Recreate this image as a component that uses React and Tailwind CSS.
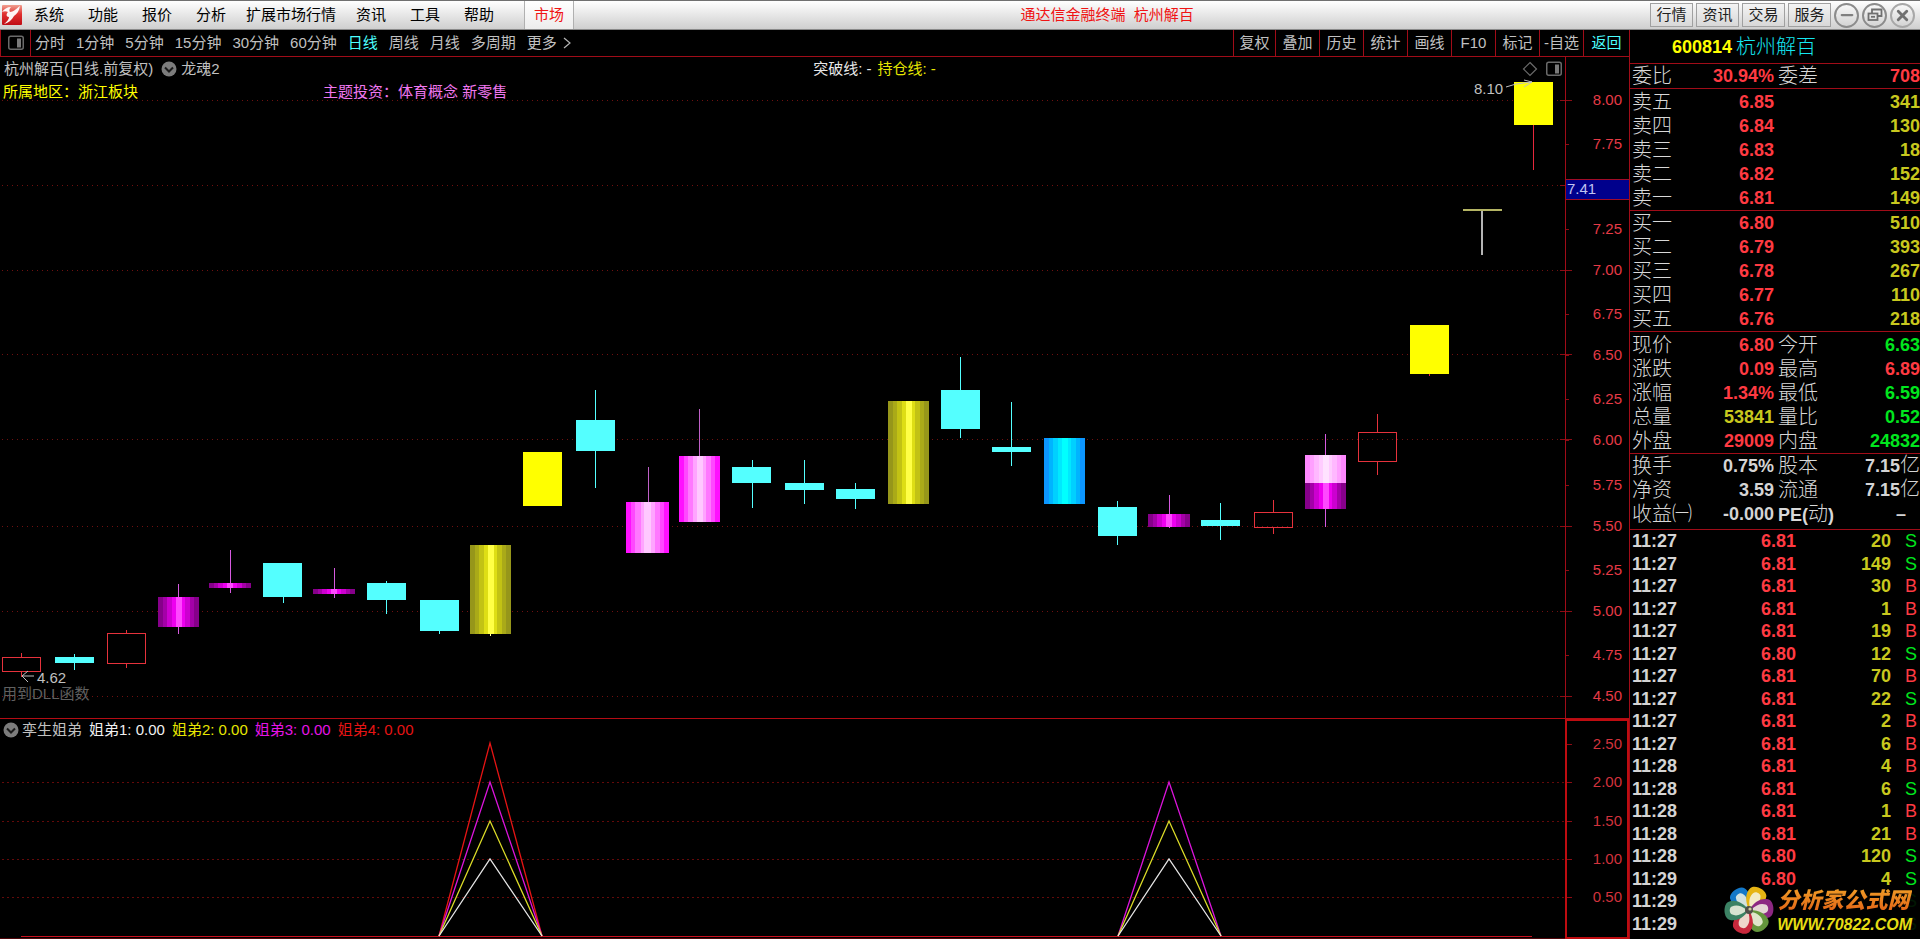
import React from "react";
import { Minus, X } from "lucide-react";

const CHART_FONT = '"Liberation Sans", "Noto Sans CJK SC", sans-serif';

const MENU = ["系统", "功能", "报价", "分析", "扩展市场行情", "资讯", "工具", "帮助"];
const PERIODS = ["分时", "1分钟", "5分钟", "15分钟", "30分钟", "60分钟", "日线", "周线", "月线", "多周期"];
const TOOLS = ["复权", "叠加", "历史", "统计", "画线", "F10", "标记", "-自选"];
const QUICK = ["行情", "资讯", "交易", "服务"];

const RED = "text-[#ff3a42]";
const GREEN = "text-[#00e61e]";
const YELLOW = "text-[#c8c81e]";
const WHITE = "text-[#d4d4d4]";

const SELLS = [
  ["卖五", "6.85", "341"],
  ["卖四", "6.84", "130"],
  ["卖三", "6.83", "18"],
  ["卖二", "6.82", "152"],
  ["卖一", "6.81", "149"],
];

const BUYS = [
  ["买一", "6.80", "510"],
  ["买二", "6.79", "393"],
  ["买三", "6.78", "267"],
  ["买四", "6.77", "110"],
  ["买五", "6.76", "218"],
];

const QUOTE = [
  ["现价", "6.80", RED, "今开", "6.63", GREEN],
  ["涨跌", "0.09", RED, "最高", "6.89", RED],
  ["涨幅", "1.34%", RED, "最低", "6.59", GREEN],
  ["总量", "53841", YELLOW, "量比", "0.52", GREEN],
  ["外盘", "29009", RED, "内盘", "24832", GREEN],
];

const TICKS = [
  ["11:27", "6.81", "20", "S"],
  ["11:27", "6.81", "149", "S"],
  ["11:27", "6.81", "30", "B"],
  ["11:27", "6.81", "1", "B"],
  ["11:27", "6.81", "19", "B"],
  ["11:27", "6.80", "12", "S"],
  ["11:27", "6.81", "70", "B"],
  ["11:27", "6.81", "22", "S"],
  ["11:27", "6.81", "2", "B"],
  ["11:27", "6.81", "6", "B"],
  ["11:28", "6.81", "4", "B"],
  ["11:28", "6.81", "6", "S"],
  ["11:28", "6.81", "1", "B"],
  ["11:28", "6.81", "21", "B"],
  ["11:28", "6.80", "120", "S"],
  ["11:29", "6.80", "4", "S"],
  ["11:29", "", "", "S"],
  ["11:29", "", "", "S"],
];

// x, width, body top, body bottom, wick x, wick top, wick bottom, kind
const CANDLES = [
  [2, 39, 657, 672, 21, 653, 677, "hollow"],
  [55, 39, 657, 663, 74, 654, 670, "cyan"],
  [107, 39, 633, 664, 126, 630, 668, "hollow"],
  [158, 41, 597, 627, 178, 584, 634, "magenta"],
  [209, 42, 583, 588, 230, 550, 593, "magenta"],
  [263, 39, 563, 597, 283, 563, 603, "cyan"],
  [313, 42, 589, 594, 334, 568, 598, "magenta"],
  [367, 39, 583, 600, 386, 581, 614, "cyan"],
  [420, 39, 600, 631, 439, 600, 634, "cyan"],
  [470, 41, 545, 634, 490, 545, 636, "gold"],
  [523, 39, 452, 506, 542, 452, 506, "yellow"],
  [576, 39, 420, 451, 595, 390, 488, "cyan"],
  [626, 43, 502, 553, 648, 467, 553, "pink"],
  [679, 41, 456, 522, 699, 409, 522, "pink"],
  [732, 39, 467, 483, 752, 460, 508, "cyan"],
  [785, 39, 483, 490, 804, 460, 504, "cyan"],
  [836, 39, 489, 499, 855, 483, 509, "cyan"],
  [888, 41, 401, 504, 908, 401, 504, "gold"],
  [941, 39, 390, 429, 960, 357, 438, "cyan"],
  [992, 39, 447, 452, 1011, 402, 466, "cyan"],
  [1044, 41, 438, 504, 1064, 438, 504, "blue"],
  [1098, 39, 507, 536, 1117, 501, 545, "cyan"],
  [1148, 42, 514, 527, 1169, 495, 528, "magenta"],
  [1201, 39, 520, 526, 1220, 503, 540, "cyan"],
  [1254, 39, 512, 528, 1273, 500, 534, "hollow"],
  [1305, 41, 483, 509, 1325, 434, 527, "magenta"],
  [1305, 41, 455, 483, 1325, 455, 483, "light"],
  [1358, 39, 432, 462, 1377, 414, 475, "hollow"],
  [1410, 39, 325, 374, 1429, 325, 376, "yellow"],
  [1514, 39, 82, 125, 1533, 82, 170, "yellow"],
];

const SHADES = {
  magenta: ["#86008a", "#a400a8", "#cc00d0", "#ee00f0", "#ff48ff"],
  gold: ["#96961a", "#aaaa18", "#c2c214", "#dede14", "#ffff46"],
  pink: ["#ff10ff", "#ff48ff", "#ff78ff", "#ffa4ff", "#ffc8ff"],
  blue: ["#0c96ff", "#00b4ff", "#00d0ff", "#00e8ff", "#00ffff"],
  light: ["#ff88ff", "#ffa0ff", "#ffb8ff", "#ffccff", "#ffe2ff"],
};

const FILLS = {
  cyan: "#54ffff",
  yellow: "#ffff00",
  magenta: "url(#magenta)",
  gold: "url(#gold)",
  pink: "url(#pink)",
  blue: "url(#blue)",
  light: "url(#light)",
};

const WICKS = {
  hollow: "#e6323c",
  cyan: "#54ffff",
  yellow: "#e6283c",
  magenta: "#d65ae0",
  pink: "#c060c8",
  gold: "#ffffa0",
  blue: "#00ffff",
  light: "#ffe2ff",
};

const GRID = [100, 185, 270, 354, 439, 526, 611, 696];
const PRICES = [
  ["8.00", 100],
  ["7.75", 144],
  ["7.25", 229],
  ["7.00", 270],
  ["6.75", 314],
  ["6.50", 355],
  ["6.25", 399],
  ["6.00", 440],
  ["5.75", 485],
  ["5.50", 526],
  ["5.25", 570],
  ["5.00", 611],
  ["4.75", 655],
  ["4.50", 696],
];

const LEVELS = [
  ["2.50", 744],
  ["2.00", 782],
  ["1.50", 821],
  ["1.00", 859],
  ["0.50", 897],
];

function ShadeGradient({ id, colors }) {
  const bands = [...colors, ...colors.slice(0, -1).reverse()];
  const edges = [0, 12, 22, 34, 43, 58, 67, 79, 89, 100];
  return (
    <linearGradient id={id}>
      {bands.map((color, i) => (
        <React.Fragment key={i}>
          <stop offset={`${edges[i]}%`} stopColor={color} />
          <stop offset={`${edges[i + 1]}%`} stopColor={color} />
        </React.Fragment>
      ))}
    </linearGradient>
  );
}

function Candle({ data }) {
  const [x, w, top, bottom, wx, high, low, kind] = data;
  const wick = WICKS[kind];
  if (kind === "hollow") {
    return (
      <g stroke={wick} fill="none">
        <rect x={x + 0.5} y={top + 0.5} width={w - 1} height={bottom - top - 1} />
        <path d={`M${wx + 0.5} ${high}V${top}M${wx + 0.5} ${bottom}V${low}`} />
      </g>
    );
  }
  return (
    <g>
      <rect x={x} y={top} width={w} height={bottom - top} fill={FILLS[kind]} />
      <path d={`M${wx + 0.5} ${high}V${top}M${wx + 0.5} ${bottom}V${low}`} stroke={wick} />
    </g>
  );
}

function ChevronDisc() {
  return (
    <svg className="size-4" viewBox="0 0 16 16">
      <circle cx="8" cy="8" r="7.5" fill="#7c7c7c" />
      <path d="M4 6.5l4 4 4-4" fill="none" stroke="#1a1a1a" strokeWidth="2" />
    </svg>
  );
}

function PaneIcon() {
  return (
    <svg className="size-4" viewBox="0 0 16 16">
      <rect x="0.75" y="1.25" width="14.5" height="13" rx="2" fill="none" stroke="#6a6a6a" strokeWidth="1.5" />
      <rect x="9" y="3.5" width="4" height="9" fill="#7a7a7a" />
    </svg>
  );
}

function MenuBar() {
  return (
    <header className="flex h-[30px] items-center border-t border-b border-t-[#707070] border-b-[#8a8a8a] bg-linear-to-b from-white to-[#cfcfcf] text-[15px] leading-5 text-black">
      <svg className="ml-0.5 size-5 shrink-0" viewBox="0 0 20 20">
        <defs>
          <linearGradient id="logo" x1="0" y1="0" x2="0" y2="1">
            <stop offset="0" stopColor="#f0a090" />
            <stop offset="0.45" stopColor="#e03030" />
            <stop offset="1" stopColor="#c00c14" />
          </linearGradient>
        </defs>
        <rect width="20" height="20" rx="1" fill="url(#logo)" />
        <path d="M0 7c2-3 5-5 9-5-2 2-2 4-1 5 3 0 6-3 10-6-1 5-3 8-6 10-2 4-6 7-10 8 3-2 5-5 5-7-3 0-3-3-1-5-2-1-4-1-6 0z" fill="#fff" fillOpacity="0.95" />
      </svg>
      <nav className="flex pr-[18px]">
        {MENU.map((item) => (
          <button key={item} type="button" className={item.length > 2 ? "px-2" : "px-3"}>
            {item}
          </button>
        ))}
      </nav>
      <button type="button" className="h-full w-[50px] shrink-0 border-x border-[#b0b0b0] bg-linear-to-b from-white to-[#ececec] text-[#f01414]">
        市场
      </button>
      <h1 className="flex-1 pr-2.5 text-center whitespace-pre text-[#f01414]">通达信金融终端{"  "}杭州解百</h1>
      <div className="flex items-center gap-[3px] pr-[5px]">
        {QUICK.map((item) => (
          <button
            key={item}
            type="button"
            className="h-6 w-[43px] border border-[#a0a0a0] bg-linear-to-b from-[#f4f4f4] to-[#d8d8d8] text-[#202020]"
          >
            {item}
          </button>
        ))}
        <button type="button" aria-label="最小化" className="flex size-[25px] items-center justify-center rounded-full border-2 border-[#8c8c8c] text-[#808080]">
          <Minus size={18} strokeWidth={3} />
        </button>
        <button type="button" aria-label="还原" className="flex size-[25px] items-center justify-center rounded-full border-2 border-[#8c8c8c]">
          <svg className="size-4" viewBox="0 0 16 16" fill="none" stroke="#707070" strokeWidth="1.8">
            <path d="M5 6V2.5h9.5V9H11" />
            <rect x="1.5" y="6.5" width="9" height="6.5" />
            <path d="M4 9.8h4" />
          </svg>
        </button>
        <button type="button" aria-label="关闭" className="flex size-[25px] items-center justify-center rounded-full border-2 border-[#a8a8a8] text-[#707070]">
          <X size={17} strokeWidth={4} />
        </button>
      </div>
    </header>
  );
}

function PeriodBar() {
  return (
    <div className="flex h-[27px] items-stretch border-b border-[#a00c18] text-[15px] leading-5">
      <button type="button" aria-label="侧栏" className="flex w-[31px] items-center justify-center border-x border-[#a00c18]">
        <PaneIcon />
      </button>
      <nav className="flex flex-1 items-center gap-[11px] pl-1">
        {PERIODS.map((item) => (
          <button key={item} type="button" className={item === "日线" ? "text-[#4dffff]" : ""}>
            {item}
          </button>
        ))}
        <button type="button" className="flex items-center gap-1.5">
          更多
          <svg className="h-3 w-2" viewBox="0 0 8 12" fill="none" stroke="#b4b4b4" strokeWidth="1.2">
            <path d="M1 1l6 5-6 5" />
          </svg>
        </button>
      </nav>
      <div className="flex">
        {TOOLS.map((item) => (
          <button key={item} type="button" className="w-11 border-l border-[#a00c18] first:w-[42px]">
            {item}
          </button>
        ))}
        <button type="button" className="w-[46px] border-l border-[#a00c18] text-[#4dffff]">
          返回
        </button>
      </div>
    </div>
  );
}

function PriceChart() {
  return (
    <section className="relative">
      <svg
        className="block h-auto w-full"
        viewBox="0 57 1629 661"
        shapeRendering="crispEdges"
        fontFamily={CHART_FONT}
        fontSize="15"
      >
        <defs>
          {Object.entries(SHADES).map(([id, colors]) => (
            <ShadeGradient key={id} id={id} colors={colors} />
          ))}
        </defs>

        {GRID.map((y) => (
          <g key={y}>
            <path d={`M2 ${y + 0.5}H1560`} stroke="#701010" strokeDasharray="1 4" />
            <path d={`M1560 ${y + 0.5}H1572`} stroke="#8c0c14" />
          </g>
        ))}
        {PRICES.map(([label, y]) => (
          <g key={label}>
            <path d={`M1566 ${y + 0.5}H1569`} stroke="#8c0c14" />
            <text x="1622" y={y + 5} textAnchor="end" fill="#e63a46">
              {label}
            </text>
          </g>
        ))}
        <path d="M1565.5 57V718" stroke="#a00c18" />
        <rect x="1566" y="180" width="63" height="20" fill="#00008c" />
        <path d="M1566 179.5H1629M1566 199.5H1629" stroke="#a00c28" />
        <text x="1567" y="194" fill="#c0c4f0">
          7.41
        </text>

        {CANDLES.map((c, i) => (
          <Candle key={i} data={c} />
        ))}
        <path d="M1482 211V255" stroke="#b4b4b4" strokeWidth="2" />
        <path d="M1463 210H1502" stroke="#b4b464" strokeWidth="2" />

        {/* high / low markers */}
        <g stroke="#c0c0c0" fill="none" shapeRendering="auto">
          <path d="M1506 87l10-3 16-2M1524 80l8 2-8 5" />
          <path d="M34 676H22M28 671l-6 5 6 6" />
        </g>
        <text x="1474" y="94" fill="#c0c0c0">
          8.10
        </text>
        <text x="37" y="683" fill="#c0c0c0">
          4.62
        </text>
        <text x="2" y="699" fill="#606060">
          用到DLL函数
        </text>
      </svg>

      <div className="absolute top-0 left-0 flex w-[96%] flex-col text-[15px] leading-[23px]">
        <div className="flex items-center">
          <div className="flex w-[52%] items-center gap-1 pl-1">
            <h2 className="pr-1">杭州解百(日线.前复权)</h2>
            <ChevronDisc />
            <span>龙魂2</span>
          </div>
          <div className="flex gap-1.5">
            <span className="text-[#e8e8e8]">突破线: -</span>
            <span className="text-[#e6e600]">持仓线: -</span>
          </div>
          <div className="ml-auto flex items-center gap-2 pr-0.5">
            <svg className="size-4" viewBox="0 0 16 16" fill="none" stroke="#6a6a6a" strokeWidth="1.2">
              <path d="M8 1.5L14.5 8 8 14.5 1.5 8z" />
            </svg>
            <PaneIcon />
          </div>
        </div>
        <div className="flex pl-[3px]">
          <span className="w-80 text-[#ffff00]">所属地区：浙江板块</span>
          <span className="text-[#f078f0]">主题投资：体育概念 新零售</span>
        </div>
      </div>
    </section>
  );
}

function Peak({ x, top, color }) {
  return <path d={`M${x - 51} 936L${x} ${top}L${x + 52} 936`} fill="none" stroke={color} strokeWidth="1.3" />;
}

function IndicatorChart() {
  return (
    <section className="relative border-t border-[#b40c14]">
      <svg className="block h-auto w-full" viewBox="0 719 1629 220" fontFamily={CHART_FONT} fontSize="15">
        <g shapeRendering="crispEdges">
          {LEVELS.slice(1).map(([label, y]) => (
            <path key={label} d={`M2 ${y + 0.5}H1565`} stroke="#640a0a" strokeDasharray="2 3" />
          ))}
          <path d="M21 936.5H1532" stroke="#c8101e" />
          <path d="M0 938.5H1566" stroke="#50060a" />
          <path d="M1566 719V939M1628 719V939M1565 720H1629M1565 938H1629" stroke="#be0c10" strokeWidth="2" />
        </g>
        {LEVELS.map(([label, y]) => (
          <g key={label}>
            <path d={`M1567 ${y + 0.5}H1572`} stroke="#8c0c14" />
            <text x="1622" y={y + 5} textAnchor="end" fill="#d2323c">
              {label}
            </text>
          </g>
        ))}
        <Peak x={490} top={743} color="#e61414" />
        <Peak x={490} top={782} color="#dc14dc" />
        <Peak x={490} top={821} color="#dcdc28" />
        <Peak x={490} top={859} color="#e6e6e6" />
        <Peak x={1169} top={782} color="#dc14dc" />
        <Peak x={1169} top={821} color="#dcdc28" />
        <Peak x={1169} top={859} color="#e6e6e6" />
      </svg>
      <div className="absolute top-0 left-0 flex items-center gap-[7px] pl-[3px] text-[15px] leading-[21px]">
        <div className="flex items-center gap-[3px]">
          <ChevronDisc />
          <h2>孪生姐弟</h2>
        </div>
        <span className="text-[#f0f0f0]">姐弟1: 0.00</span>
        <span className="text-[#e6e600]">姐弟2: 0.00</span>
        <span className="text-[#e614e6]">姐弟3: 0.00</span>
        <span className="text-[#e61414]">姐弟4: 0.00</span>
      </div>
    </section>
  );
}

function QuoteTable({ className = "", rows }) {
  return (
    <table className={"w-full table-fixed border-b border-[#a00c18] " + className}>
      <colgroup>
        <col className="w-16" />
        <col className="w-20" />
        <col className="w-[60px]" />
        <col />
      </colgroup>
      <tbody>{rows}</tbody>
    </table>
  );
}

function QuoteRow({ row }) {
  const [label, value, color, label2, value2, color2] = row;
  return (
    <tr className="h-6">
      <th className="pl-0.5 text-left text-xl/6 font-light whitespace-nowrap text-[#d8d8d8]">{label}</th>
      <td className={"text-right text-lg/6 font-bold " + color}>{value}</td>
      <th className="pl-1 text-left text-xl/6 font-light whitespace-nowrap text-[#d8d8d8]">{label2}</th>
      <td className={"text-right text-lg/6 font-bold whitespace-nowrap " + color2}>{value2}</td>
    </tr>
  );
}

function BookRow({ row }) {
  const [label, price, volume] = row;
  return (
    <tr className="h-6">
      <th className="pl-0.5 text-left text-xl/6 font-light text-[#d8d8d8]">{label}</th>
      <td className={"text-right text-lg/6 font-bold " + RED}>{price}</td>
      <td colSpan={2} className={"text-right text-lg/6 font-bold " + YELLOW}>{volume}</td>
    </tr>
  );
}

function Shares({ value }) {
  return (
    <>
      {value}
      <span className="text-xl/4 font-light">亿</span>
    </>
  );
}

function Petal({ angle, color }) {
  return (
    <g transform={`rotate(${angle} 26 25)`}>
      <path d="M26 25C17 18 15 11 17 5C19 -1 33 -1 35 5C37 11 35 18 26 25z" fill={color} />
      <path d="M26 23C21 17 20 12 22 8C23 5 29 5 30 8C32 12 31 17 26 23z" fill="#f4f4e4" fillOpacity="0.85" />
    </g>
  );
}

function SiteMark() {
  return (
    <a href="#" className="absolute right-0 bottom-0.5 flex items-center gap-px bg-black/90 pr-2">
      <svg className="h-[52px] w-[54px]" viewBox="0 0 52 52">
        <Petal angle={-35} color="#1478c8" />
        <Petal angle={28} color="#e6b414" />
        <Petal angle={85} color="#8c2882" />
        <Petal angle={142} color="#64963c" />
        <Petal angle={203} color="#c8283c" />
        <Petal angle={268} color="#3c8264" />
        <circle cx="26" cy="25" r="4" fill="#50504a" />
        <circle cx="27" cy="24" r="1.6" fill="#d2c8a0" />
      </svg>
      <span className="flex flex-col items-center">
        <span className="bg-linear-to-b from-[#f0a028] to-[#e05a14] bg-clip-text pr-0.5 text-[22px]/7 font-black text-transparent italic">
          分析家公式网
        </span>
        <span className="text-base/5 font-bold text-[#e6dc14] italic">WWW.70822.COM</span>
      </span>
    </a>
  );
}

function QuotePanel() {
  return (
    <aside className="relative w-[291px] shrink-0 overflow-hidden border-l border-[#a00c18]">
      <h2 className="flex h-[34px] items-center gap-1 border-b border-[#a00c18] pl-[42px]">
        <span className="text-lg/6 font-bold text-[#ffff00]">600814</span>
        <span className="text-xl/6 font-light text-[#14e6f0]">杭州解百</span>
      </h2>
      <QuoteTable rows={<QuoteRow row={["委比", "30.94%", RED, "委差", "708", RED]} />} />
      <div className="pt-px">
        <QuoteTable rows={SELLS.map((row) => <BookRow key={row[0]} row={row} />)} />
      </div>
      <QuoteTable rows={BUYS.map((row) => <BookRow key={row[0]} row={row} />)} />
      <div className="pt-px">
        <QuoteTable rows={QUOTE.map((row) => <QuoteRow key={row[0]} row={row} />)} />
      </div>
      <div className="border-b border-[#a00c18] pb-[3px]">
        <QuoteTable
          className="border-b-0"
          rows={
            <>
              <QuoteRow row={["换手", "0.75%", WHITE, "股本", <Shares value="7.15" />, WHITE]} />
              <QuoteRow row={["净资", "3.59", WHITE, "流通", <Shares value="7.15" />, WHITE]} />
              <QuoteRow
                row={[
                  "收益㈠",
                  "-0.000",
                  WHITE,
                  <>
                    <span className="text-lg/4 font-bold">PE(</span>动<span className="text-lg/4 font-bold">)</span>
                  </>,
                  <span className="pr-3.5">–</span>,
                  WHITE,
                ]}
              />
            </>
          }
        />
      </div>
      <table className="w-full table-fixed text-lg/5 font-bold">
        <colgroup>
          <col className="w-20" />
          <col className="w-[86px]" />
          <col className="w-[95px]" />
          <col />
        </colgroup>
        <tbody>
          {TICKS.map(([time, price, volume, side], i) => (
            <tr key={i} className="h-[22px] even:h-[23px]">
              <td className={"pl-0.5 " + WHITE}>{time}</td>
              <td className={"text-right " + RED}>{price}</td>
              <td className={"text-right " + YELLOW}>{volume}</td>
              <td className={"pr-[3px] text-right font-normal " + (side === "S" ? GREEN : RED)}>{side}</td>
            </tr>
          ))}
        </tbody>
      </table>
      <SiteMark />
    </aside>
  );
}

export default function App() {
  return (
    <div className="min-h-screen bg-black font-['Liberation_Sans','Noto_Sans_CJK_SC',sans-serif] text-[#c0c0c0]">
      <MenuBar />
      <div className="flex">
        <main className="min-w-0 flex-1">
          <PeriodBar />
          <PriceChart />
          <IndicatorChart />
        </main>
        <QuotePanel />
      </div>
    </div>
  );
}
